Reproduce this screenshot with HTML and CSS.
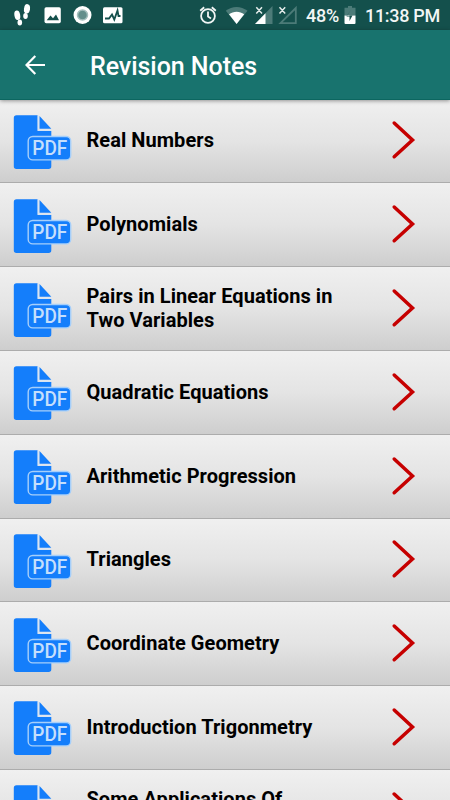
FILE: index.html
```html
<!DOCTYPE html>
<html lang="en">
  <head>
    <meta charset="UTF-8" />
    <meta name="viewport" content="width=device-width, initial-scale=1.0" />
    <title>Revision Notes</title>
    <link rel="stylesheet" href="styles.css">
  </head>
  <body>
    <!-- Shared icons -->
    <svg class="sprite" aria-hidden="true">
      <symbol id="pdf" viewBox="0 0 60 56">
        <path class="pdf-fill" d="M3.5 1.3H24.6V17H38.3V52.3a2.7 2.7 0 0 1-2.7 2.7H3.5a2.7 2.7 0 0 1-2.7-2.7V4a2.7 2.7 0 0 1 2.7-2.7z" />
        <path class="pdf-fill" d="M26.5 2L38.3 14.8H26.5z" />
        <path class="pdf-edge" d="M25.3 1.5V16.2H38.3" />
        <rect class="pdf-badge" x="15.2" y="22.5" width="42.5" height="23.4" rx="4.5" />
        <text class="pdf-text" x="19.3" y="41" textLength="35" lengthAdjust="spacingAndGlyphs">PDF</text>
      </symbol>
      <symbol id="chevron" viewBox="0 0 26 42">
        <path class="chevron-line" d="M3.2 4L21.5 21L3.2 37.7" />
      </symbol>
    </svg>

    <!-- Status bar -->
    <div class="status-bar">
      <div class="status-left">
        <svg width="130" height="30" viewBox="0 0 130 30">
          <g fill="#fff">
            <ellipse cx="27" cy="8.8" rx="3" ry="4.7" transform="rotate(8 27 8.8)" />
            <ellipse cx="25.5" cy="16" rx="2.3" ry="3" />
            <ellipse cx="17.3" cy="15.2" rx="2.9" ry="4.8" transform="rotate(-10 17.3 15.2)" />
            <ellipse cx="19.8" cy="22.5" rx="2.3" ry="3" />
            <rect x="44.5" y="7.2" width="16.3" height="16" rx="1.7" />
            <circle cx="82.5" cy="15" r="9" />
            <rect x="103" y="7.2" width="19.5" height="16" rx="1.5" />
          </g>
          <path d="M46.7 20.3L50.5 15.5L53 18.3L56 14.5L59 20.3z" fill="#14504c" />
          <circle cx="82.5" cy="15" r="5" fill="#638f8c" stroke="#a4bfbd" stroke-width="1.5" />
          <path d="M105 18.5H109L112 14.5L114.3 19.5L117.5 10.5L118.5 16H120.5" fill="none" stroke="#14504c" stroke-width="1.8" />
        </svg>
      </div>
      <div class="status-right">
        <svg width="102" height="30" viewBox="0 0 102 30">
          <g fill="none" stroke="#f2f6f5" stroke-width="1.8">
            <circle cx="9" cy="16" r="6.9" />
            <path d="M9 11.5V16.5L12 18.5M1.2 10.8L5.2 7.3M16.8 10.8L12.8 7.3" />
          </g>
          <path d="M26.8 10.8C33 5.6 42 5.6 48.5 10.8L37.6 24z" fill="#4c7b78" />
          <path d="M30 14.3C34.5 10.9 40.7 10.9 45.2 14.3L37.6 24z" fill="#fff" />
          <path d="M73.5 6V24H56z" fill="#4c7b78" />
          <path d="M66.5 13.3V24H56z" fill="#fff" />
          <path d="M57.3 7.3L63 13.5M63 7.3L57.3 13.5M80.5 7.3L86.2 13.5M86.2 7.3L80.5 13.5" stroke="#e5eceb" stroke-width="1.5" />
          <path d="M96.8 8V23.2H81.5z" fill="none" stroke="#4c7b78" stroke-width="1.8" />
        </svg>
        <span class="battery-level">48%</span>
        <svg class="battery" width="12" height="30" viewBox="0 0 12 30">
          <path d="M4 6H8V7.8H11.5V15.5H.5V7.8H4z" fill="#4c7b78" />
          <path d="M.5 15.5H11.5V23a1 1 0 0 1-1 1H1.5a1 1 0 0 1-1-1z" fill="#fff" />
          <path d="M7 10L2.5 16H5.5V15.500H8.500L5.500 21V16.500H2.500z" fill="#14504c" />
        </svg>
        <span class="clock">11:38 PM</span>
      </div>
    </div>

    <!-- App bar -->
    <div class="app-bar">
      <svg class="back" width="22" height="22" viewBox="0 0 22 22">
        <path d="M20 11H2.5M10.3 2L1.5 11L10.3 20" fill="none" stroke="#fff" stroke-width="2.2" />
      </svg>
      <h1>Revision Notes</h1>
    </div>

    <!-- Chapter list -->
    <div class="list">
      <div class="row">
        <svg class="pdf"><use href="#pdf" /></svg>
        <p>Real Numbers</p>
        <svg class="chevron"><use href="#chevron" /></svg>
      </div>
      <div class="row">
        <svg class="pdf"><use href="#pdf" /></svg>
        <p>Polynomials</p>
        <svg class="chevron"><use href="#chevron" /></svg>
      </div>
      <div class="row">
        <svg class="pdf"><use href="#pdf" /></svg>
        <p>Pairs in Linear Equations in<br>Two Variables</p>
        <svg class="chevron"><use href="#chevron" /></svg>
      </div>
      <div class="row">
        <svg class="pdf"><use href="#pdf" /></svg>
        <p>Quadratic Equations</p>
        <svg class="chevron"><use href="#chevron" /></svg>
      </div>
      <div class="row">
        <svg class="pdf"><use href="#pdf" /></svg>
        <p>Arithmetic Progression</p>
        <svg class="chevron"><use href="#chevron" /></svg>
      </div>
      <div class="row">
        <svg class="pdf"><use href="#pdf" /></svg>
        <p>Triangles</p>
        <svg class="chevron"><use href="#chevron" /></svg>
      </div>
      <div class="row">
        <svg class="pdf"><use href="#pdf" /></svg>
        <p>Coordinate Geometry</p>
        <svg class="chevron"><use href="#chevron" /></svg>
      </div>
      <div class="row">
        <svg class="pdf"><use href="#pdf" /></svg>
        <p>Introduction Trigonmetry</p>
        <svg class="chevron"><use href="#chevron" /></svg>
      </div>
      <div class="row">
        <svg class="pdf"><use href="#pdf" /></svg>
        <p>Some Applications Of<br>Trigonometry</p>
        <svg class="chevron"><use href="#chevron" /></svg>
      </div>
    </div>
  </body>
</html>
```
FILE: styles.css
```css
body {
  margin: 0;
  height: 100vh;
  display: flex;
  flex-direction: column;
  overflow: hidden;
  font-family: Roboto, "Liberation Sans", sans-serif;
  background: #e4e4e4;
}

svg {
  display: block;
  flex: none;
}

.sprite {
  position: absolute;
  width: 0;
  height: 0;
}

/* Status bar */
.status-bar {
  flex: none;
  height: 30px;
  display: flex;
  justify-content: space-between;
  background: #14504c;
  color: #f2f6f5;
}

.status-right {
  display: flex;
  padding-right: 10px;
  font-size: 18px;
  font-weight: 500;
  line-height: 32px;
  white-space: nowrap;
}

.battery-level {
  width: 34px;
  margin-left: 5.5px;
  letter-spacing: -0.2px;
}

.battery {
  margin-left: 4px;
}

.clock {
  width: 75px;
  margin-left: 9px;
  letter-spacing: -0.3px;
}

/* App bar */
.app-bar {
  flex: none;
  box-sizing: border-box;
  height: 70px;
  display: flex;
  align-items: center;
  padding: 1px 0 0 25px;
  background: #18736e;
  border-bottom: 1px solid #0c6660;
  box-shadow: 0 1px 4px rgba(0, 0, 0, 0.4);
  z-index: 1;
}

.app-bar h1 {
  margin: 4px 0 0 43px;
  font-size: 25px;
  font-weight: 500;
  line-height: 30px;
  letter-spacing: -0.05px;
  color: #fff;
}

/* Chapter list */
.list {
  flex: 1;
  overflow: hidden;
  margin-top: -0.4px;
}

.row {
  box-sizing: border-box;
  height: 83.8px;
  display: flex;
  align-items: center;
  padding: 0 33px 1.2px 13px;
  background: linear-gradient(#f0f0f0, #e4e4e4 50%, #cecece);
  border-bottom: 1px solid #acacac;
}

.row p {
  flex: 1;
  margin: 0 0 0 13.5px;
  font-size: 20px;
  font-weight: 700;
  line-height: 24px;
  letter-spacing: 0.05px;
  color: #000;
  white-space: nowrap;
}

.pdf {
  width: 60px;
  height: 56px;
  margin-top: 3px;
}

.pdf-fill {
  fill: #147efb;
}

.pdf-edge {
  fill: none;
  stroke: #d5e4f5;
  stroke-width: 1.2;
}

.pdf-badge {
  fill: #147efb;
  stroke: #a6cffa;
  stroke-width: 1.4;
}

.pdf-text {
  font-size: 19.3px;
  font-weight: 500;
  fill: #c5dffc;
}

.chevron {
  width: 26px;
  height: 42px;
}

.chevron-line {
  fill: none;
  stroke: #c60000;
  stroke-width: 3.5;
  stroke-linecap: round;
}
```
